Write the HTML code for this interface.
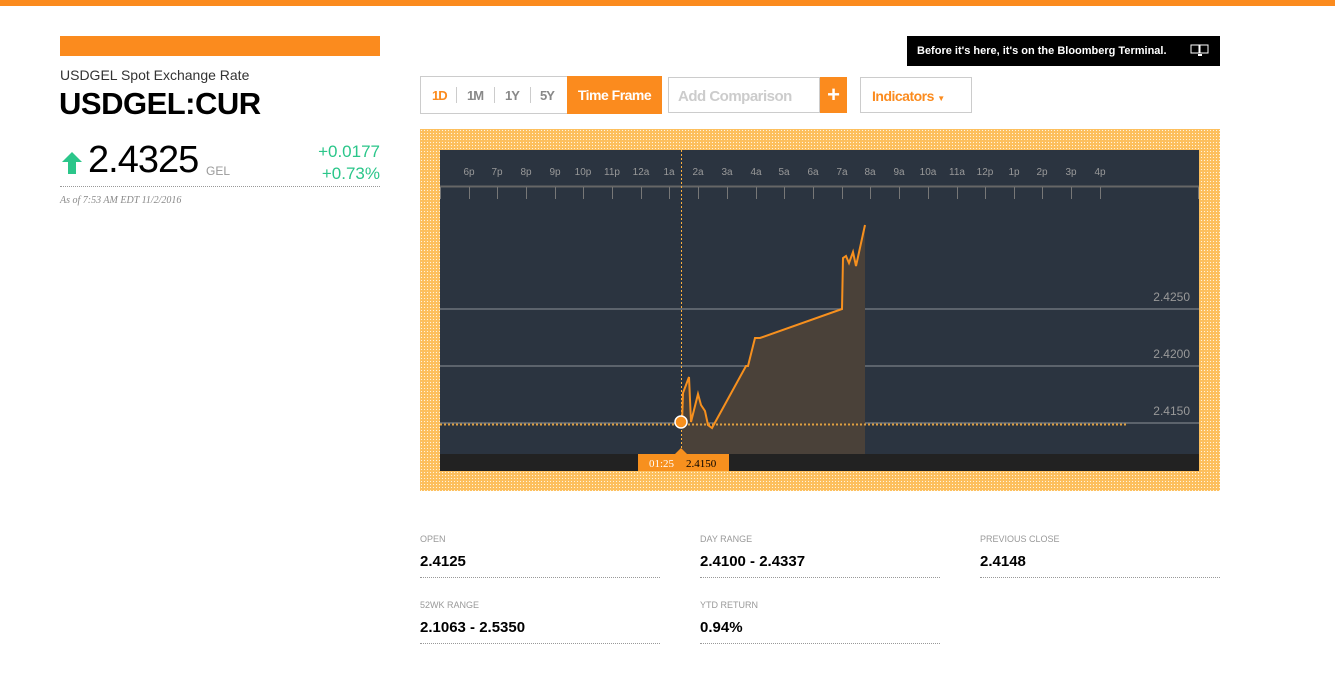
<!DOCTYPE html>
<html><head><meta charset="utf-8"><style>
*{margin:0;padding:0;box-sizing:border-box}
body{width:1335px;height:682px;background:#fff;font-family:"Liberation Sans",sans-serif;position:relative;overflow:hidden}
.a{position:absolute}
.topbar{left:0;top:0;width:1335px;height:6px;background:#fb8b1e}
.lbl{font-size:9px;color:#999;text-transform:uppercase}
.val{font-size:15px;font-weight:bold;color:#000}
.dl{border-bottom:1px dotted #999;width:240px;height:1px}
.tl{font-size:10px;color:#999;top:167px;width:30px;margin-left:-15px;text-align:center}
</style></head><body>
<div class="a topbar"></div>
<div class="a" style="left:60px;top:36px;width:320px;height:20px;background:#fb8b1e"></div>
<div class="a" style="left:60px;top:67px;font-size:14px;color:#333">USDGEL Spot Exchange Rate</div>
<div class="a" style="left:59px;top:86px;font-size:31px;font-weight:bold;color:#000;letter-spacing:-0.5px">USDGEL:CUR</div>
<svg class="a" style="left:61px;top:151px" width="22" height="24"><path d="M11 1 L21 11 L15 11 L15 23 L7 23 L7 11 L1 11 Z" fill="#2bc68a"/></svg>
<div class="a" style="left:88px;top:139px;font-size:38px;color:#000;letter-spacing:-1px">2.4325</div>
<div class="a" style="left:206px;top:164px;font-size:12px;color:#999">GEL</div>
<div class="a" style="left:300px;top:141px;width:80px;text-align:right;font-size:17px;color:#2bc68a;line-height:22px">+0.0177<br>+0.73%</div>
<div class="a" style="left:60px;top:186px;width:320px;border-bottom:1px dotted #999"></div>
<div class="a" style="left:60px;top:195px;font-family:'Liberation Serif',serif;font-style:italic;font-size:10px;color:#888">As of 7:53 AM EDT 11/2/2016</div>

<div class="a" style="left:907px;top:36px;width:313px;height:30px;background:#000;color:#fff;font-size:11px;font-weight:bold;line-height:30px;padding-left:10px">Before it's here, it's on the Bloomberg Terminal.
<svg style="position:absolute;left:283px;top:8px" width="20" height="14"><rect x="1" y="1" width="8" height="8" fill="none" stroke="#fff"/><rect x="10" y="1" width="8" height="8" fill="none" stroke="#fff"/><rect x="8" y="10" width="4" height="2" fill="#fff"/></svg></div>

<div class="a" style="left:420px;top:76px;width:242px;height:38px;border:1px solid #ccc"></div>
<div class="a" style="left:432px;top:88px;font-size:13px;font-weight:bold;color:#fb8b1e;letter-spacing:-1px">1D</div>
<div class="a" style="left:456px;top:87px;width:1px;height:16px;background:#ccc"></div>
<div class="a" style="left:467px;top:88px;font-size:13px;font-weight:bold;color:#888;letter-spacing:-1px">1M</div>
<div class="a" style="left:494px;top:87px;width:1px;height:16px;background:#ccc"></div>
<div class="a" style="left:505px;top:88px;font-size:13px;font-weight:bold;color:#888;letter-spacing:-1px">1Y</div>
<div class="a" style="left:530px;top:87px;width:1px;height:16px;background:#ccc"></div>
<div class="a" style="left:540px;top:88px;font-size:13px;font-weight:bold;color:#888;letter-spacing:-1px">5Y</div>
<div class="a" style="left:567px;top:76px;width:95px;height:38px;background:#fb8b1e;color:#fff;font-size:14px;font-weight:bold;text-align:center;line-height:38px;letter-spacing:-0.5px">Time Frame</div>
<div class="a" style="left:668px;top:77px;width:152px;height:36px;border:1px solid #ccc;font-size:15px;font-weight:bold;color:#ccc;line-height:38px;padding-left:9px;letter-spacing:-0.5px">Add Comparison</div>
<div class="a" style="left:820px;top:77px;width:27px;height:36px;background:#fb8b1e;color:#fff;font-size:22px;font-weight:bold;text-align:center;line-height:36px">+</div>
<div class="a" style="left:860px;top:77px;width:112px;height:36px;border:1px solid #ccc;font-size:14px;font-weight:bold;color:#fb8b1e;line-height:36px;padding-left:11px;letter-spacing:-0.5px">Indicators <span style="font-size:8px">▼</span></div>

<div class="a" style="left:420px;top:129px;width:800px;height:362px;background-color:#fdbf5c;background-image:radial-gradient(#fff3dc 0.6px,transparent 0.8px);background-size:3px 3px"></div>
<div class="a" style="left:440px;top:150px;width:759px;height:321px;background:#2b3440"></div>
<div class="a" style="left:440px;top:454px;width:759px;height:17px;background:#222"></div>
<div class="a tl" style="left:469px">6p</div><div class="a tl" style="left:497px">7p</div><div class="a tl" style="left:526px">8p</div><div class="a tl" style="left:555px">9p</div><div class="a tl" style="left:583px">10p</div><div class="a tl" style="left:612px">11p</div><div class="a tl" style="left:641px">12a</div><div class="a tl" style="left:669px">1a</div><div class="a tl" style="left:698px">2a</div><div class="a tl" style="left:727px">3a</div><div class="a tl" style="left:756px">4a</div><div class="a tl" style="left:784px">5a</div><div class="a tl" style="left:813px">6a</div><div class="a tl" style="left:842px">7a</div><div class="a tl" style="left:870px">8a</div><div class="a tl" style="left:899px">9a</div><div class="a tl" style="left:928px">10a</div><div class="a tl" style="left:957px">11a</div><div class="a tl" style="left:985px">12p</div><div class="a tl" style="left:1014px">1p</div><div class="a tl" style="left:1042px">2p</div><div class="a tl" style="left:1071px">3p</div><div class="a tl" style="left:1100px">4p</div>
<svg class="a" style="left:0;top:0" width="1335" height="682">
<line x1="440" y1="186.5" x2="1199" y2="186.5" stroke="#666" stroke-width="2"/>
<g stroke="#777" stroke-width="1">
<path d="M440.5 187v12M469.5 187v12M497.5 187v12M526.5 187v12M555.5 187v12M583.5 187v12M612.5 187v12M641.5 187v12M669.5 187v12M698.5 187v12M727.5 187v12M756.5 187v12M784.5 187v12M813.5 187v12M842.5 187v12M870.5 187v12M899.5 187v12M928.5 187v12M957.5 187v12M985.5 187v12M1014.5 187v12M1042.5 187v12M1071.5 187v12M1100.5 187v12M1198.5 187v12"/>
</g>
<g stroke="#6c737b" stroke-width="1.5"><line x1="440" y1="309" x2="1199" y2="309"/><line x1="440" y1="366" x2="1199" y2="366"/><line x1="440" y1="423" x2="1199" y2="423"/></g>
<g font-family="Liberation Sans" font-size="12" fill="#999" text-anchor="end"><text x="1190" y="301">2.4250</text><text x="1190" y="358">2.4200</text><text x="1190" y="415">2.4150</text></g>
<path d="M682 454L682 423L683 393L689 377L691 422L698 394L701 405L705 411L708 425L712 428L746 366L748 366L755 338L760 338L842 309L843 258L846 256L849 263L853 252L856 266L865 225L865 454Z" fill="#4a4139"/>
<line x1="440" y1="424.5" x2="1127" y2="424.5" stroke="#e0a040" stroke-width="2" stroke-dasharray="2 2"/>
<line x1="681.5" y1="150" x2="681.5" y2="454" stroke="#fbb040" stroke-width="1" stroke-dasharray="2 2"/>
<path d="M682 423L683 393L689 377L691 422L698 394L701 405L705 411L708 425L712 428L746 366L748 366L755 338L760 338L842 309L843 258L846 256L849 263L853 252L856 266L865 225" fill="none" stroke="#f7901e" stroke-width="2"/>
<circle cx="681" cy="422" r="6" fill="#f7901e" stroke="#fff" stroke-width="1.5"/>
<path d="M675 454L681 448L687 454Z" fill="#f7901e"/>
<rect x="638" y="454" width="91" height="17" fill="#f7901e"/>
<text x="649" y="467" font-family="Liberation Serif" font-size="11" fill="#fff">01:25</text>
<text x="686" y="467" font-family="Liberation Serif" font-size="11" fill="#000">2.4150</text>
</svg>

<div class="a lbl" style="left:420px;top:534px">Open</div>
<div class="a val" style="left:420px;top:553px">2.4125</div>
<div class="a dl" style="left:420px;top:577px"></div>
<div class="a lbl" style="left:700px;top:534px">Day Range</div>
<div class="a val" style="left:700px;top:553px">2.4100 - 2.4337</div>
<div class="a dl" style="left:700px;top:577px"></div>
<div class="a lbl" style="left:980px;top:534px">Previous Close</div>
<div class="a val" style="left:980px;top:553px">2.4148</div>
<div class="a dl" style="left:980px;top:577px"></div>
<div class="a lbl" style="left:420px;top:600px">52wk Range</div>
<div class="a val" style="left:420px;top:619px">2.1063 - 2.5350</div>
<div class="a dl" style="left:420px;top:643px"></div>
<div class="a lbl" style="left:700px;top:600px">YTD Return</div>
<div class="a val" style="left:700px;top:619px">0.94%</div>
<div class="a dl" style="left:700px;top:643px"></div>
</body></html>
